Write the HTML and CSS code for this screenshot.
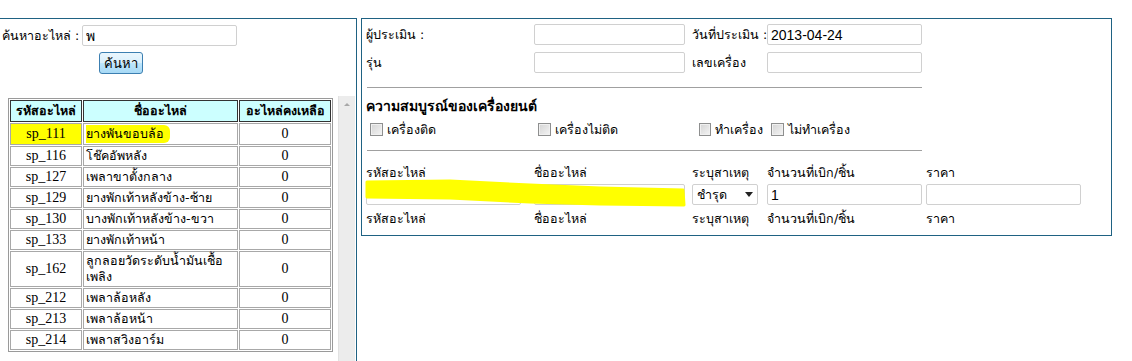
FILE: index.html
```html
<!DOCTYPE html>
<html lang="th">
<head>
  <meta charset="UTF-8" />
  <title>เบิกอะไหล่</title>
  <link rel="stylesheet" href="styles.css">
</head>
<body>
  <div class="page">
    <div class="panel left">
      <div class="search">
        <label>ค้นหาอะไหล่ :</label>
        <input type="text" class="txt" value="พ">
      </div>
      <div class="search-btn">
        <button type="button" class="btn">ค้นหา</button>
      </div>

      <div class="list">
        <div class="list-body">
          <table class="parts">
            <tr>
              <th class="c1">รหัสอะไหล่</th>
              <th class="c2">ชื่ออะไหล่</th>
              <th class="c3">อะไหล่คงเหลือ</th>
            </tr>
            <tr>
              <td class="code mark">sp_111</td>
              <td class="name"><span class="mark-name">ยางพันขอบล้อ</span></td>
              <td class="qty">0</td>
            </tr>
            <tr><td class="code">sp_116</td><td class="name">โช๊คอัพหลัง</td><td class="qty">0</td></tr>
            <tr><td class="code">sp_127</td><td class="name">เพลาขาตั้งกลาง</td><td class="qty">0</td></tr>
            <tr><td class="code">sp_129</td><td class="name">ยางพักเท้าหลังข้าง-ซ้าย</td><td class="qty">0</td></tr>
            <tr><td class="code">sp_130</td><td class="name">บางพักเท้าหลังข้าง-ขวา</td><td class="qty">0</td></tr>
            <tr><td class="code">sp_133</td><td class="name">ยางพักเท้าหน้า</td><td class="qty">0</td></tr>
            <tr><td class="code">sp_162</td><td class="name">ลูกลอยวัดระดับน้ำมันเชื้อเพลิง</td><td class="qty">0</td></tr>
            <tr><td class="code">sp_212</td><td class="name">เพลาล้อหลัง</td><td class="qty">0</td></tr>
            <tr><td class="code">sp_213</td><td class="name">เพลาล้อหน้า</td><td class="qty">0</td></tr>
            <tr><td class="code">sp_214</td><td class="name">เพลาสวิงอาร์ม</td><td class="qty">0</td></tr>
          </table>
        </div>
        <div class="scroll"><span class="up"></span></div>
      </div>
    </div>

    <div class="panel right">
      <div class="row first">
        <label>ผู้ประเมิน :</label>
        <input type="text" class="txt short">
        <label>วันที่ประเมิน :</label>
        <input type="text" class="txt" value="2013-04-24">
      </div>
      <div class="row">
        <label>รุ่น</label>
        <input type="text" class="txt short">
        <label>เลขเครื่อง</label>
        <input type="text" class="txt">
      </div>

      <hr class="line top-line">

      <h4>ความสมบูรณ์ของเครื่องยนต์</h4>
      <div class="row checks">
        <label><input type="checkbox"> เครื่องติด</label>
        <label><input type="checkbox"> เครื่องไม่ติด</label>
        <label><input type="checkbox"> ทำเครื่อง</label>
        <label><input type="checkbox"> ไม่ทำเครื่อง</label>
      </div>

      <hr class="line">

      <div class="row heads">
        <span>รหัสอะไหล่</span>
        <span>ชื่ออะไหล่</span>
        <span>ระบุสาเหตุ</span>
        <span>จำนวนที่เบิก/ชิ้น</span>
        <span>ราคา</span>
      </div>
      <div class="row inputs">
        <input type="text" class="txt">
        <input type="text" class="txt short">
        <div class="select">ชำรุด <span class="arrow"></span></div>
        <input type="text" class="txt" value="1">
        <input type="text" class="txt">
      </div>
      <div class="row heads last">
        <span>รหัสอะไหล่</span>
        <span>ชื่ออะไหล่</span>
        <span>ระบุสาเหตุ</span>
        <span>จำนวนที่เบิก/ชิ้น</span>
        <span>ราคา</span>
      </div>

      <!-- highlighter mark over the first two inputs -->
      <svg class="marker" width="330" height="30" viewBox="0 0 330 30">
        <polygon points="5,3 88,2 168,6 238,9 321,11 322,26 238,25 168,23 88,19 5,18" fill="#ffff00" stroke="#ffff00" stroke-width="3" stroke-linejoin="round"/>
      </svg>
    </div>
  </div>
</body>
</html>
```

FILE: styles.css
```css
body {
  margin: 0;
  font-family: Tahoma, "DejaVu Sans", "Noto Sans", sans-serif;
  font-size: 12.5px;
  color: #000;
  background: #fff;
}
.page {
  display: flex;
  align-items: flex-start;
  gap: 4px;
  padding-top: 18px;
}
.panel {
  border: 1px solid #1f6283;
}
.left {
  width: 356px;
  height: 400px;
  border-left: none;
}
.right {
  position: relative;
  width: 745px;
  padding: 5px 0 8px 4px;
  display: flex;
  flex-direction: column;
}

/* search */
.search {
  display: grid;
  grid-template-columns: 80px 155px;
  align-items: center;
  padding: 6px 0 0 2px;
}
.search-btn {
  width: 242px;
  text-align: center;
  margin-top: 6px;
}
.btn {
  font-family: inherit;
  font-size: 13px;
  height: 22px;
  padding: 0 4px;
  border: 1px solid #3c7fb1;
  border-radius: 3px;
  background: linear-gradient(#eaf6fd, #d9f0fc 50%, #bee6fd 51%, #a7d9f5);
  cursor: pointer;
}
.txt {
  box-sizing: border-box;
  height: 21px;
  width: 155px;
  padding: 1px 3px;
  border: 1px solid #d0d0d0;
  border-radius: 2px;
  font-family: "Liberation Sans", Arial, sans-serif;
  font-size: 14px;
  margin: 0;
}

/* parts list */
.list {
  display: flex;
  margin: 22px 1px 0 0;
  height: 290px;
  overflow: hidden;
}
.list-body {
  flex: 1;
  padding: 2px 0 0 8px;
}
.scroll {
  width: 17px;
  background: #ececec;
  border-left: 1px solid #e2e2e2;
  box-sizing: border-box;
  display: flex;
  justify-content: center;
  padding-top: 7px;
}
.up {
  width: 0;
  height: 0;
  border-left: 3px solid transparent;
  border-right: 3px solid transparent;
  border-bottom: 3px solid #a8a8a8;
}
.parts {
  width: 325px;
  border: 1px solid #9a9a9a;
  border-spacing: 1px;
}
.parts th {
  background: #ccffff;
  border: 1px solid #333;
  font-weight: bold;
  height: 19px;
  padding: 0 2px;
}
.parts td {
  border: 1px solid #a8a8a8;
  height: 16px;
  padding: 1px 2px;
}
.c1 { width: 66px; }
.c3 { width: 86px; }
.parts .code,
.parts .qty {
  font-family: "Liberation Serif", "Times New Roman", serif;
  font-size: 14px;
  text-align: center;
}
.parts .name {
  line-height: 16px;
}
.parts td.mark {
  background: #ffff00;
}
.mark-name {
  display: inline-block;
  background: #ffff00;
  padding: 1px 6px 1px 0;
  border-radius: 0 6px 6px 0;
}

/* form on the right */
.row {
  display: grid;
  grid-template-columns: 164px 154px 71px 155px 154px;
  column-gap: 4px;
  align-items: center;
  line-height: 17px;
}
.row label,
.row span {
  white-space: nowrap;
}
.row.first {
  margin-bottom: 7px;
}
.txt.short {
  width: 151px;
}
.line {
  width: 555px;
  margin: 0 0 0 1px;
  border: none;
  border-top: 1px solid #a0a0a0;
  height: 0;
}
.top-line {
  margin-top: 14px;
}
h4 {
  margin: 10px 0 6px;
  font-size: 14px;
  line-height: 17px;
}
.checks {
  margin-bottom: 12px;
}
.checks label {
  display: flex;
  align-items: center;
}
.checks input {
  appearance: none;
  box-sizing: border-box;
  margin: 0 4px 0 4px;
  width: 13px;
  height: 13px;
  border: 1px solid #8e8f8f;
  background: linear-gradient(135deg, #d4d4d4, #f4f4f4);
  box-shadow: inset 0 0 0 1px #f0f0f0;
}
.checks label:nth-child(3) input {
  margin-left: 7px;
}
.heads {
  margin: 13px 0 3px;
}
.heads.last {
  margin: 5px 0 0;
}
.select {
  box-sizing: border-box;
  width: 66px;
  height: 21px;
  border: 1px solid #d0d0d0;
  border-radius: 2px;
  padding: 2px 4px;
  display: flex;
  justify-content: space-between;
  align-items: center;
}
.arrow {
  width: 0;
  height: 0;
  border-left: 4px solid transparent;
  border-right: 4px solid transparent;
  border-top: 5px solid #222;
}
.marker {
  position: absolute;
  left: 0;
  top: 160px;
}
```
